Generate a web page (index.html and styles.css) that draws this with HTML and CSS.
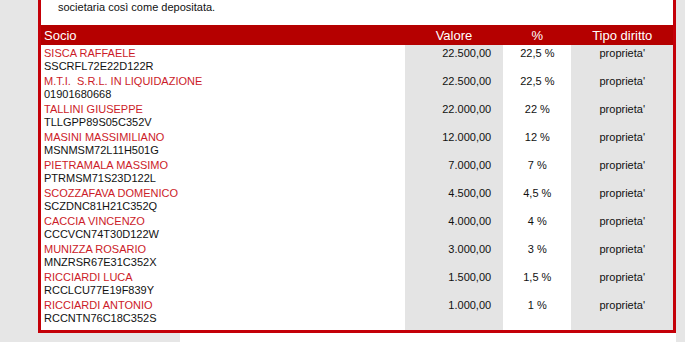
FILE: index.html
```html
<!DOCTYPE html>
<html lang="it">
<head>
<meta charset="utf-8">
<title>Soci</title>
<link rel="stylesheet" href="styles.css">
</head>
<body>
<div class="page">
  <div class="side"></div>
  <div class="main">
    <div class="box">
      <p class="intro">societaria così come depositata.</p>
      <table class="soci">
        <thead>
          <tr><th class="c-socio">Socio</th><th class="c-val">Valore</th><th class="c-pct">%</th><th class="c-tipo">Tipo diritto</th></tr>
        </thead>
        <tbody>
          <tr><td class="c-socio"><span class="name">SISCA RAFFAELE</span><span class="code">SSCRFL72E22D122R</span></td><td class="c-val">22.500,00</td><td class="c-pct">22,5 %</td><td class="c-tipo">proprieta'</td></tr>
          <tr><td class="c-socio"><span class="name">M.T.I.&nbsp; S.R.L. IN LIQUIDAZIONE</span><span class="code">01901680668</span></td><td class="c-val">22.500,00</td><td class="c-pct">22,5 %</td><td class="c-tipo">proprieta'</td></tr>
          <tr><td class="c-socio"><span class="name">TALLINI GIUSEPPE</span><span class="code">TLLGPP89S05C352V</span></td><td class="c-val">22.000,00</td><td class="c-pct">22 %</td><td class="c-tipo">proprieta'</td></tr>
          <tr><td class="c-socio"><span class="name">MASINI MASSIMILIANO</span><span class="code">MSNMSM72L11H501G</span></td><td class="c-val">12.000,00</td><td class="c-pct">12 %</td><td class="c-tipo">proprieta'</td></tr>
          <tr><td class="c-socio"><span class="name">PIETRAMALA MASSIMO</span><span class="code">PTRMSM71S23D122L</span></td><td class="c-val">7.000,00</td><td class="c-pct">7 %</td><td class="c-tipo">proprieta'</td></tr>
          <tr><td class="c-socio"><span class="name">SCOZZAFAVA DOMENICO</span><span class="code">SCZDNC81H21C352Q</span></td><td class="c-val">4.500,00</td><td class="c-pct">4,5 %</td><td class="c-tipo">proprieta'</td></tr>
          <tr><td class="c-socio"><span class="name">CACCIA VINCENZO</span><span class="code">CCCVCN74T30D122W</span></td><td class="c-val">4.000,00</td><td class="c-pct">4 %</td><td class="c-tipo">proprieta'</td></tr>
          <tr><td class="c-socio"><span class="name">MUNIZZA ROSARIO</span><span class="code">MNZRSR67E31C352X</span></td><td class="c-val">3.000,00</td><td class="c-pct">3 %</td><td class="c-tipo">proprieta'</td></tr>
          <tr><td class="c-socio"><span class="name">RICCIARDI LUCA</span><span class="code">RCCLCU77E19F839Y</span></td><td class="c-val">1.500,00</td><td class="c-pct">1,5 %</td><td class="c-tipo">proprieta'</td></tr>
          <tr class="last"><td class="c-socio"><span class="name">RICCIARDI ANTONIO</span><span class="code">RCCNTN76C18C352S</span></td><td class="c-val">1.000,00</td><td class="c-pct">1 %</td><td class="c-tipo">proprieta'</td></tr>
        </tbody>
      </table>
    </div>
    <div class="below">
      <div class="below-gray"></div>
      <div class="below-white"></div>
    </div>
  </div>
  <div class="rside"></div>
  <div class="rest"></div>
</div>
</body>
</html>
```

FILE: styles.css
```css
html, body {
  margin: 0;
  padding: 0;
  background: #ffffff;
  font-family: "Liberation Sans", Arial, sans-serif;
}

.page {
  display: flex;
  width: 696px;
  height: 342px;
  overflow: hidden;
}

.side {
  width: 38px;
  flex: none;
  background: #e6e6e6;
}

.main {
  width: 638px;
  flex: none;
  display: flex;
  flex-direction: column;
}

.rside {
  width: 9px;
  flex: none;
  background: #e6e6e6;
}

.rest {
  flex: 1;
  background: #ffffff;
}

.box {
  border: 3px solid #c40008;
  border-top: none;
  background: #ffffff;
}

.intro {
  margin: 0;
  height: 25px;
  box-sizing: border-box;
  padding: 1px 0 0 17px;
  font-size: 11px;
  line-height: 13px;
  color: #111111;
}

.soci {
  width: 632px;
  border-collapse: collapse;
  border-spacing: 0;
  table-layout: fixed;
  font-size: 11px;
  line-height: 13px;
  color: #111111;
}

.soci th {
  background: #b50000;
  color: #ffffff;
  font-weight: normal;
  font-size: 13px;
  height: 20px;
  padding: 1px 0 0;
  line-height: 19px;
  text-align: center;
  box-sizing: border-box;
}

.soci th.c-socio {
  text-align: left;
  padding-left: 3px;
}

.soci td {
  padding: 2px 0 0;
  height: 28px;
  box-sizing: border-box;
  vertical-align: top;
}

.soci .c-socio { width: 362px; }
.soci td.c-socio { padding-left: 3px; }
.soci .c-val { width: 98px; }
.soci .c-pct { width: 68px; }
.soci .c-tipo { width: 101px; }

.soci td.c-val {
  background: #e4e4e4;
  text-align: right;
  padding-right: 12px;
}

.soci td.c-pct {
  text-align: center;
}

.soci td.c-tipo {
  background: #e4e4e4;
  text-align: center;
}

.soci tr.last td {
  height: 33px;
}

.name {
  display: block;
  color: #cc1b28;
}

.code {
  display: block;
  color: #111111;
}

.below {
  flex: 1;
  display: flex;
}

.below-gray {
  width: 142px;
  background: #e6e6e6;
}

.below-white {
  flex: 1;
  background: #ffffff;
}
```
